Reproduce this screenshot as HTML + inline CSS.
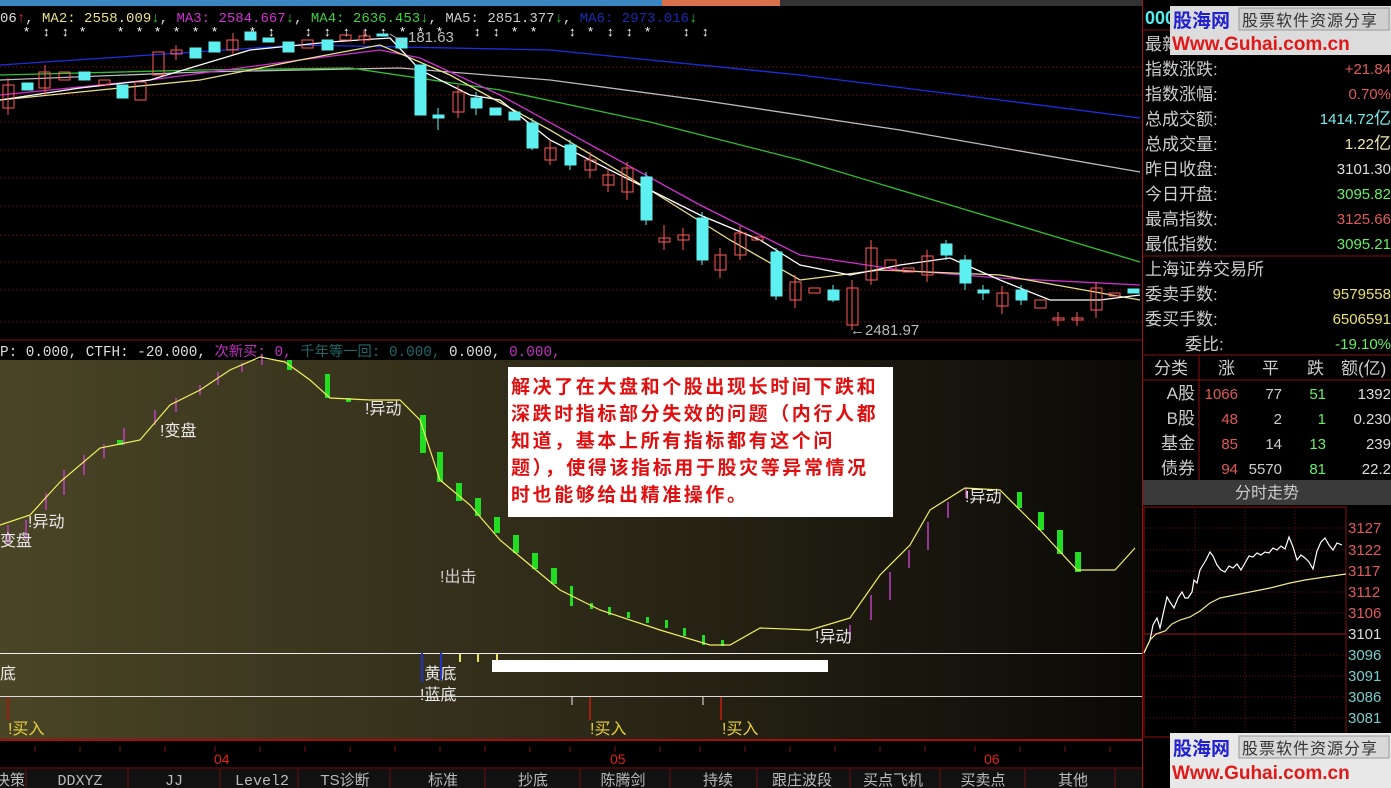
<!DOCTYPE html>
<html><head><meta charset="utf-8"><style>
html,body{margin:0;padding:0;background:#000;width:1391px;height:788px;overflow:hidden}
svg{display:block}
text{font-family:"Liberation Sans","Noto Sans CJK SC",sans-serif}
.m{font-family:"Liberation Mono","Noto Sans CJK SC",monospace}
.c{font-family:"Noto Sans CJK SC","WenQuanYi Zen Hei",sans-serif}
.s{font-family:"Noto Serif CJK SC","Noto Sans CJK SC",serif}
</style></head><body>
<svg width="1391" height="788" viewBox="0 0 1391 788" xmlns="http://www.w3.org/2000/svg">
<defs>
<linearGradient id="ol" x1="0" y1="0" x2="1" y2="0">
<stop offset="0" stop-color="#4a4526"/><stop offset="0.5" stop-color="#2e2a18"/><stop offset="1" stop-color="#0a0906"/>
</linearGradient>
</defs>
<rect width="1391" height="788" fill="#000"/>
<rect x="0" y="0" width="662" height="6" fill="#3a86c0"/>
<rect x="662" y="0" width="118" height="6" fill="#d8704a"/>
<rect x="780" y="0" width="362" height="6" fill="#333"/>
<text class="m" x="0" y="22" font-size="14" fill="#ddd">06<tspan fill="#e33">↑</tspan>, <tspan fill="#e8e08a">MA2: 2558.009</tspan><tspan fill="#3c3">↓</tspan>, <tspan fill="#d030d0">MA3: 2584.667</tspan><tspan fill="#3c3">↓</tspan>, <tspan fill="#40d040">MA4: 2636.453</tspan><tspan fill="#3c3">↓</tspan>, <tspan fill="#ccc">MA5: 2851.377</tspan><tspan fill="#3c3">↓</tspan>, <tspan fill="#1a2bb0">MA6: 2973.016</tspan><tspan fill="#3c3">↓</tspan></text>
<g fill="#fff" font-size="13" class="m">
<text x="24" y="36">*</text><text x="43" y="36">↕</text><text x="62" y="36">↕</text><text x="80" y="36">*</text><text x="118" y="36">*</text><text x="137" y="36">*</text><text x="155" y="36">*</text><text x="174" y="36">*</text><text x="193" y="36">*</text><text x="212" y="36">*</text><text x="250" y="36">*</text><text x="268" y="36">↕</text><text x="305" y="36">↕</text><text x="324" y="36">↕</text><text x="343" y="36">↕</text><text x="362" y="36">↕</text><text x="380" y="36">↕</text><text x="400" y="36">*</text><text x="418" y="36">*</text><text x="437" y="36">*</text><text x="474" y="36">↕</text><text x="493" y="36">↕</text><text x="512" y="36">*</text><text x="531" y="36">*</text><text x="569" y="36">↕</text><text x="588" y="36">*</text><text x="607" y="36">↕</text><text x="626" y="36">↕</text><text x="645" y="36">*</text><text x="683" y="36">↕</text><text x="702" y="36">↕</text>
</g>
<g stroke="#5a0c0c" stroke-width="1" stroke-dasharray="2,2">
<line x1="0" y1="67" x2="1142" y2="67"/><line x1="0" y1="95" x2="1142" y2="95"/><line x1="0" y1="122" x2="1142" y2="122"/><line x1="0" y1="150" x2="1142" y2="150"/><line x1="0" y1="178" x2="1142" y2="178"/><line x1="0" y1="206" x2="1142" y2="206"/><line x1="0" y1="235" x2="1142" y2="235"/><line x1="0" y1="262" x2="1142" y2="262"/><line x1="0" y1="290" x2="1142" y2="290"/><line x1="0" y1="322" x2="1142" y2="322"/>
</g>
<line x1="0" y1="340" x2="1142" y2="340" stroke="#8a1010"/>
<line x1="1142.5" y1="0" x2="1142.5" y2="788" stroke="#a01010"/>
<g fill="none" stroke-width="1.3">
<polyline stroke="#1c2ee0" points="0,65 150,55 300,45 550,50 800,75 1000,100 1140,118"/>
<polyline stroke="#bbb" points="0,80 200,72 400,68 550,80 700,100 900,130 1140,172"/>
<polyline stroke="#30c030" points="0,75 200,70 350,68 500,90 650,122 800,160 950,205 1140,262"/>
<polyline stroke="#d030d0" points="0,95 150,80 300,60 380,50 420,58 500,95 600,150 700,205 800,255 900,270 1000,278 1140,285"/>
<polyline stroke="#e8e08a" points="0,100 100,90 200,80 300,60 380,45 450,75 550,130 650,190 730,240 800,280 880,270 1000,275 1140,300"/>
<polyline stroke="#fff" points="0,100 80,88 150,80 250,50 330,42 390,38 420,70 470,95 500,100 550,140 650,190 700,215 760,240 800,265 850,275 900,265 950,258 1000,280 1050,300 1100,300 1140,295"/>
</g>
<g stroke="#ff5a5a" fill="none" stroke-width="1">
<rect x="3" y="85" width="11" height="23"/><rect x="39" y="72" width="11" height="16"/><rect x="59" y="72" width="11" height="8"/><rect x="99" y="80" width="11" height="5"/><rect x="135" y="82" width="11" height="18"/><rect x="153" y="52" width="11" height="23"/><rect x="171" y="50" width="11" height="4"/><rect x="227" y="40" width="11" height="10"/><rect x="302" y="40" width="11" height="8"/><rect x="340" y="35" width="11" height="5"/><rect x="359" y="36" width="11" height="4"/>
<rect x="453" y="92" width="11" height="20"/><rect x="545" y="148" width="11" height="12"/><rect x="585" y="160" width="11" height="10"/><rect x="603" y="175" width="11" height="10"/><rect x="622" y="168" width="11" height="24"/><rect x="659" y="238" width="11" height="4"/><rect x="678" y="235" width="11" height="5"/><rect x="715" y="255" width="11" height="15"/><rect x="735" y="233" width="11" height="22"/><rect x="752" y="237" width="11" height="3"/><rect x="790" y="282" width="11" height="18"/><rect x="809" y="288" width="11" height="5"/><rect x="847" y="288" width="11" height="37"/><rect x="866" y="248" width="11" height="32"/><rect x="885" y="260" width="11" height="10"/><rect x="903" y="268" width="11" height="4"/><rect x="922" y="256" width="11" height="19"/><rect x="997" y="293" width="11" height="13"/><rect x="1035" y="300" width="11" height="8"/><rect x="1053" y="318" width="11" height="2"/><rect x="1072" y="318" width="11" height="2"/><rect x="1091" y="288" width="11" height="22"/><rect x="1109" y="293" width="11" height="3"/>
<path d="M8 78V115M45 65V95M176 45V60M233 33V55M364 30V44M458 85V118M550 140V165M590 152V178M608 168V192M627 162V200M664 225V250M683 228V250M720 248V278M740 226V260M795 275V308M852 280V330M871 240V285M927 250V282M1002 286V314M1058 312V326M1077 312V326M1096 282V318"/>
</g>
<g fill="#5ef0f0" stroke="#5ef0f0">
<rect x="22" y="83" width="11" height="7"/><rect x="79" y="72" width="11" height="8"/><rect x="117" y="85" width="11" height="13"/><rect x="190" y="48" width="11" height="10"/><rect x="209" y="42" width="11" height="10"/><rect x="245" y="32" width="11" height="8"/><rect x="263" y="38" width="11" height="4"/><rect x="283" y="42" width="11" height="10"/><rect x="322" y="40" width="11" height="10"/><rect x="377" y="34" width="11" height="2"/><rect x="396" y="38" width="11" height="10"/>
<rect x="415" y="65" width="11" height="50"/><rect x="433" y="115" width="11" height="3"/><rect x="471" y="98" width="11" height="10"/><rect x="490" y="108" width="11" height="7"/><rect x="509" y="112" width="11" height="8"/><rect x="527" y="123" width="11" height="25"/><rect x="565" y="145" width="11" height="20"/><rect x="641" y="177" width="11" height="43"/><rect x="697" y="218" width="11" height="42"/><rect x="771" y="252" width="11" height="44"/><rect x="828" y="290" width="11" height="10"/><rect x="941" y="244" width="11" height="11"/><rect x="960" y="260" width="11" height="23"/><rect x="978" y="290" width="11" height="3"/><rect x="1016" y="290" width="11" height="10"/><rect x="1128" y="289" width="11" height="4"/>
<path fill="none" d="M438 108V130M476 92V115M532 118V150M570 140V170M646 172V225M702 212V265M776 248V300M946 240V260M965 255V290M983 285V300M1021 285V305M833 285V302"/>
</g>
<text x="408" y="42" font-size="15" fill="#bbb">181.63</text>
<line x1="390" y1="34" x2="406" y2="44" stroke="#bbb"/>
<text x="850" y="335" font-size="15" fill="#bbb">←2481.97</text>
<text class="m" x="0" y="356" font-size="14.3" fill="#ddd">P: 0.000, CTFH: -20.000, <tspan fill="#c030c0">次新买: 0,</tspan> <tspan fill="#206868">千年等一回: 0.000,</tspan> 0.000, <tspan fill="#c030c0">0.000,</tspan></text>
<rect x="0" y="360" width="1142" height="380" fill="url(#ol)"/>
<line x1="0" y1="653.5" x2="1142" y2="653.5" stroke="#eee"/>
<line x1="0" y1="696.5" x2="1142" y2="696.5" stroke="#ddd"/>
<line x1="0" y1="740" x2="1142" y2="740" stroke="#a01010" stroke-width="2"/>
<g stroke="#c040c0" stroke-width="1.5">
<path d="M8 525V545M26 520V540M46 493V510M64 470V495M84 455V475M104 444V458M124 428V445M155 410V425M176 398V412M200 385V395M218 372V385M242 363V372M262 355V365"/>
</g>
<g fill="#22dd22">
<rect x="287" y="360" width="5" height="10"/><rect x="325" y="374" width="5" height="24"/><rect x="346" y="398" width="5" height="4"/><rect x="420" y="415" width="6" height="38"/><rect x="437" y="452" width="6" height="30"/><rect x="456" y="483" width="6" height="18"/><rect x="475" y="498" width="6" height="18"/><rect x="494" y="517" width="6" height="16"/><rect x="513" y="535" width="6" height="18"/><rect x="532" y="553" width="6" height="16"/><rect x="551" y="568" width="6" height="16"/><rect x="570" y="586" width="3" height="20"/><rect x="590" y="603" width="3" height="6"/><rect x="608" y="607" width="3" height="8"/><rect x="627" y="612" width="3" height="6"/><rect x="646" y="617" width="3" height="6"/><rect x="665" y="620" width="3" height="8"/><rect x="683" y="628" width="3" height="8"/><rect x="702" y="635" width="3" height="10"/><rect x="721" y="640" width="3" height="6"/><rect x="1017" y="492" width="5" height="16"/><rect x="1038" y="512" width="6" height="18"/><rect x="1057" y="530" width="6" height="24"/><rect x="1075" y="552" width="6" height="20"/><rect x="117" y="440" width="6" height="5"/>
</g>
<g stroke="#c040c0" stroke-width="1.5">
<path d="M850 625V640M871 595V620M890 572V600M909 550V568M928 522V550M948 502V518M966 488V498"/>
</g>
<polyline fill="none" stroke="#f0f060" stroke-width="1.2" points="0,525 30,515 60,482 100,448 140,440 170,405 200,390 230,370 260,357 285,362 310,380 330,398 370,400 400,400 420,420 440,480 470,505 500,540 530,565 560,590 600,610 660,630 710,645 730,645 760,628 810,630 850,618 880,575 910,545 930,510 965,488 1000,490 1040,530 1077,570 1115,570 1135,548"/>
<g fill="#e8e8e8" font-size="16" class="c">
<text x="0" y="546">变盘</text><text x="28" y="527">!异动</text><text x="160" y="436">!变盘</text><text x="365" y="414">!异动</text><text x="440" y="582" fill="#ccc">!出击</text><text x="815" y="642">!异动</text><text x="965" y="502">!异动</text>
<text x="0" y="679">底</text><text x="420" y="679">!黄底</text><text x="420" y="700">!蓝底</text>
</g>
<g fill="#e8d040" font-size="16" class="c"><text x="8" y="734">!买入</text><text x="590" y="734">!买入</text><text x="722" y="734">!买入</text></g>
<g stroke-width="2"><path d="M422 653V682M441 653V680" stroke="#2030c0"/><path d="M460 654V662M478 654V662M497 654V662" stroke="#e8e060"/><path d="M8 697V720M590 697V720M721 697V720" stroke="#a02010"/><path d="M572 697V705M703 697V705" stroke="#eee" stroke-width="1"/></g>
<rect x="492" y="660" width="336" height="12" fill="#fff"/>
<rect x="508" y="367" width="385" height="150" fill="#fff"/>
<g fill="#e01010" font-size="19" font-weight="bold" class="s" letter-spacing="2.6">
<text x="511" y="393">解决了在大盘和个股出现长时间下跌和</text>
<text x="511" y="420">深跌时指标部分失效的问题（内行人都</text>
<text x="511" y="447">知道，基本上所有指标都有这个问</text>
<text x="511" y="474">题），使得该指标用于股灾等异常情况</text>
<text x="511" y="501">时也能够给出精准操作。</text>
</g>
<rect x="0" y="742" width="1142" height="26" fill="#000"/>
<g stroke="#7a1010"><path d="M35 746V752M80 746V752M120 746V752M165 746V752M215 746V752M260 746V752M305 746V752M350 746V752M395 746V752M440 746V752M485 746V752M530 746V752M570 746V752M615 746V752M660 746V752M700 746V752M745 746V752M790 746V752M835 746V752M880 746V752M925 746V752M975 746V752M1020 746V752M1065 746V752M1110 746V752"/></g>
<g fill="#e02020" font-size="14" class="m"><text x="214" y="764">04</text><text x="610" y="764">05</text><text x="984" y="764">06</text></g>
<line x1="0" y1="768" x2="1142" y2="768" stroke="#8a1010"/>
<rect x="0" y="769" width="1142" height="19" fill="#111"/>
<g stroke="#6a1010"><path d="M26 769V788M128 769V788M220 769V788M298 769V788M390 769V788M485 769V788M580 769V788M670 769V788M757 769V788M850 769V788M940 769V788M1025 769V788M1115 769V788"/></g>
<g fill="#bbb" font-size="15" class="c" text-anchor="middle">
<text x="10" y="785">决策</text><text x="80" y="785" class="m">DDXYZ</text><text x="174" y="785" class="m">JJ</text><text x="262" y="785" class="m">Level2</text><text x="345" y="785">TS诊断</text><text x="443" y="785">标准</text><text x="533" y="785">抄底</text><text x="623" y="785">陈腾剑</text><text x="718" y="785">持续</text><text x="802" y="785">跟庄波段</text><text x="893" y="785">买点飞机</text><text x="983" y="785">买卖点</text><text x="1073" y="785">其他</text>
</g>
<rect x="1143" y="0" width="248" height="788" fill="#000"/>
<text x="1145" y="24" font-size="18" fill="#5ee" font-weight="bold">000</text>
<line x1="1143" y1="30" x2="1391" y2="30" stroke="#8a1010"/>
<g fill="#ccc" font-size="17" class="c">
<text x="1145" y="50">最新</text>
<text x="1145" y="75">指数涨跌:</text><text x="1145" y="100">指数涨幅:</text><text x="1145" y="125">总成交额:</text><text x="1145" y="150">总成交量:</text><text x="1145" y="175">昨日收盘:</text><text x="1145" y="200">今日开盘:</text><text x="1145" y="225">最高指数:</text><text x="1145" y="250">最低指数:</text>
<text x="1145" y="275">上海证券交易所</text><text x="1145" y="300">委卖手数:</text><text x="1145" y="325">委买手数:</text><text x="1185" y="350">委比:</text>
</g>
<g font-size="15" text-anchor="end">
<text x="1391" y="74" fill="#e05a5a">+21.84</text><text x="1391" y="99" fill="#e05a5a">0.70%</text><text x="1391" y="124" fill="#7ee">1414.72<tspan class="c" font-size="17">亿</tspan></text><text x="1391" y="149" fill="#eee8b0">1.22<tspan class="c" font-size="17">亿</tspan></text><text x="1391" y="174" fill="#ddd">3101.30</text><text x="1391" y="199" fill="#6e6">3095.82</text><text x="1391" y="224" fill="#e05a5a">3125.66</text><text x="1391" y="249" fill="#6e6">3095.21</text>
<text x="1391" y="299" fill="#e8e070">9579558</text><text x="1391" y="324" fill="#e8e070">6506591</text><text x="1391" y="349" fill="#6e6">-19.10%</text>
</g>
<line x1="1143" y1="256" x2="1391" y2="256" stroke="#8a1010"/>
<line x1="1143" y1="355" x2="1391" y2="355" stroke="#8a1010"/>
<line x1="1143" y1="380" x2="1391" y2="380" stroke="#8a1010"/>
<line x1="1199" y1="355" x2="1199" y2="480" stroke="#8a1010"/>
<g font-size="17" class="c" fill="#ccc"><text x="1154" y="374">分类</text><text x="1218" y="374">涨</text><text x="1262" y="374">平</text><text x="1307" y="374">跌</text><text x="1341" y="374">额(亿)</text>
<text x="1195" y="399" text-anchor="end">A股</text><text x="1195" y="424" text-anchor="end">B股</text><text x="1195" y="449" text-anchor="end">基金</text><text x="1195" y="474" text-anchor="end">债券</text></g>
<g font-size="15" text-anchor="end">
<g fill="#e05a5a"><text x="1238" y="399">1066</text><text x="1238" y="424">48</text><text x="1238" y="449">85</text><text x="1238" y="474">94</text></g>
<g fill="#ccc"><text x="1282" y="399">77</text><text x="1282" y="424">2</text><text x="1282" y="449">14</text><text x="1282" y="474">5570</text></g>
<g fill="#6e6"><text x="1326" y="399">51</text><text x="1326" y="424">1</text><text x="1326" y="449">13</text><text x="1326" y="474">81</text></g>
<g fill="#ddd"><text x="1391" y="399">1392</text><text x="1391" y="424">0.230</text><text x="1391" y="449">239</text><text x="1391" y="474">22.2</text></g>
</g>
<rect x="1143" y="480" width="248" height="25" fill="#3a3a3a"/>
<text x="1267" y="498" font-size="16" class="c" fill="#ccc" text-anchor="middle">分时走势</text>
<rect x="1144" y="507" width="202" height="230" fill="none" stroke="#8a1010"/>
<g stroke="#6a1010" stroke-dasharray="1,2">
<path d="M1195 508V737M1245 508V737M1295 508V737M1144 528H1346M1144 550H1346M1144 571H1346M1144 592H1346M1144 613H1346M1144 655H1346M1144 676H1346M1144 697H1346M1144 718H1346"/>
</g>
<line x1="1144" y1="634" x2="1346" y2="634" stroke="#a01818"/>
<g font-size="15">
<g fill="#e05a5a"><text x="1348" y="533">3127</text><text x="1348" y="555">3122</text><text x="1348" y="576">3117</text><text x="1348" y="597">3112</text><text x="1348" y="618">3106</text></g>
<text x="1348" y="639" fill="#ddd">3101</text>
<g fill="#7cc"><text x="1348" y="660">3096</text><text x="1348" y="681">3091</text><text x="1348" y="702">3086</text><text x="1348" y="723">3081</text></g>
</g>
<polyline fill="none" stroke="#fff" stroke-width="1.2" points="1144,653 1150,640 1153,625 1157,618 1160,628 1164,610 1167,597 1170,602 1174,608 1178,598 1182,592 1185,598 1188,598 1192,592 1194,580 1197,583 1200,570 1203,565 1206,560 1210,552 1213,556 1217,565 1221,570 1225,572 1229,566 1233,568 1237,564 1241,570 1245,563 1249,556 1253,557 1257,553 1261,555 1265,552 1269,553 1273,548 1277,550 1281,546 1285,549 1289,537 1293,547 1297,560 1301,555 1305,558 1309,562 1313,569 1317,551 1321,542 1325,538 1329,545 1333,550 1337,543 1342,545"/>
<polyline fill="none" stroke="#eee890" stroke-width="1.2" points="1144,653 1150,640 1156,634 1165,631 1172,624 1180,620 1190,617 1200,611 1210,603 1220,598 1235,595 1250,592 1270,588 1290,583 1305,580 1325,577 1346,574"/>
<rect x="1170" y="6" width="221" height="49" fill="#dcdcdc"/>
<text x="1173" y="27" font-size="19" font-weight="bold" fill="#2020d0" class="c">股海网</text>
<rect x="1239" y="8" width="150" height="22" fill="#d0d0d0" stroke="#999"/>
<text x="1242" y="26" font-size="16" fill="#333" class="c" letter-spacing="1">股票软件资源分享</text>
<text x="1172" y="50" font-size="19" font-weight="bold" fill="#e01818">Www.Guhai.com.cn</text>
<rect x="1170" y="733" width="221" height="55" fill="#e8e8e8"/>
<text x="1173" y="755" font-size="19" font-weight="bold" fill="#2020d0" class="c">股海网</text>
<rect x="1239" y="736" width="150" height="22" fill="#d8d8d8" stroke="#999"/>
<text x="1242" y="754" font-size="16" fill="#333" class="c" letter-spacing="1">股票软件资源分享</text>
<text x="1172" y="779" font-size="19" font-weight="bold" fill="#e01818">Www.Guhai.com.cn</text>
</svg>
</body></html>
